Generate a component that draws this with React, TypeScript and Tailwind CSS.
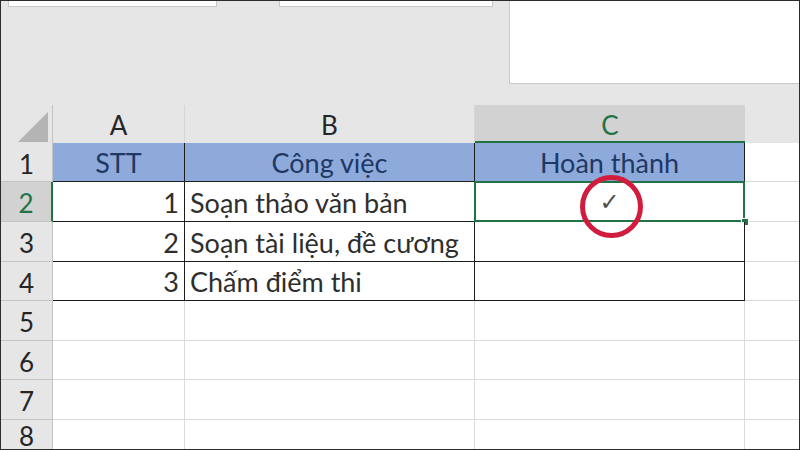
import React from 'react';

const GREEN = 'border-[#217346]';

const rowHeights = [39, 40, 40, 39, 40, 39, 40, 30];

const data: Record<number, [string, string, string]> = {
  1: ['STT', 'Công việc', 'Hoàn thành'],
  2: ['1', 'Soạn thảo văn bản', '✓'],
  3: ['2', 'Soạn tài liệu, đề cương', ''],
  4: ['3', 'Chấm điểm thi', ''],
};

function RowHeader({ n, h }: { n: number; h: number }) {
  const selected = n === 2;
  return (
    <div
      className={`flex items-center justify-center border-b border-[#c4c4c4] ${
        selected
          ? 'bg-[#d2d2d2] text-[#217346] border-r-2 border-r-[#217346]'
          : 'bg-[#e6e6e6] text-[#262626] border-r border-r-[#c4c4c4]'
      }`}
      style={{ height: h }}
    >
      <span className="text-[26px] leading-none pt-[3px]">{n}</span>
    </div>
  );
}

export default function App() {
  return (
    <div
      className="w-[800px] h-[450px] overflow-hidden bg-[#e6e6e6] border border-[#2b2b2b] flex flex-col"
      style={{ fontFamily: 'Lato, "Noto Sans", sans-serif' }}
    >
      {/* ribbon remains above the sheet */}
      <div className="h-[104px] flex items-start shrink-0">
        <div className="ml-[7px] w-[209px] h-[6px] bg-white border-x border-b border-[#c8c8c8]" />
        <div className="ml-[62px] w-[214px] h-[6px] bg-white border-x border-b border-[#c8c8c8]" />
        <div className="ml-[16px] flex-1 h-[83px] bg-white border-l border-b border-[#c8c8c8]" />
      </div>

      <div className="grid grid-cols-[52px_132px_290px_270px_1fr] flex-1">
        {/* column headers */}
        <div className="h-[38px] border-r border-[#c4c4c4] flex items-end justify-end pr-[4px] pb-[1px]">
          <div className="w-0 h-0 border-l-[30px] border-l-transparent border-b-[30px] border-b-[#b4b4b4]" />
        </div>
        {['A', 'B'].map((c) => (
          <div
            key={c}
            className="h-[38px] border-r border-[#d6d6d6] flex items-center justify-center text-[26px] text-[#262626] pt-[3px]"
          >
            {c}
          </div>
        ))}
        <div className={`h-[38px] bg-[#d2d2d2] border-b-2 ${GREEN} flex items-center justify-center text-[26px] text-[#217346] pt-[4px]`}>
          C
        </div>
        <div className="h-[38px]" />

        {rowHeights.map((h, i) => {
          const r = i + 1;
          const row = data[r];
          const inTable = !!row;
          const header = r === 1;
          const cellBase = inTable
            ? `${header ? 'bg-[#8eaadb] text-[#1f3864]' : 'bg-white text-[#2e2e2e]'} border-r border-b border-[#1c1c1c]`
            : 'bg-white border-r border-b border-[#dadada]';
          return (
            <React.Fragment key={r}>
              <RowHeader n={r} h={h} />
              <div
                className={`${cellBase} flex items-center text-[27px] pt-[3px] ${header ? 'justify-center' : 'justify-end pr-[5px]'}`}
                style={{ height: h }}
              >
                {row?.[0]}
              </div>
              <div
                className={`${cellBase} flex items-center text-[27px] pt-[3px] ${header ? 'justify-center' : 'justify-start pl-[5px]'} whitespace-nowrap`}
                style={{ height: h }}
              >
                {row?.[1]}
              </div>
              <div
                className={`${cellBase} relative flex items-center justify-center text-[27px] pt-[3px]`}
                style={{ height: h }}
              >
                {r === 2 ? (
                  <>
                    <span
                      className="text-[24px] leading-none text-[#4f4f4f] -mt-[2px]"
                      style={{ fontFamily: '"DejaVu Sans", sans-serif' }}
                    >
                      ✓
                    </span>
                    <div className={`absolute -left-[1px] -top-[1px] -right-[1px] -bottom-[1px] border-2 ${GREEN}`} />
                    <div className="absolute -right-[5px] -bottom-[5px] w-[8px] h-[8px] bg-[#217346] border border-white" />
                    <div className="absolute left-[105px] top-[-7px] w-[63px] h-[63px] rounded-full border-[5px] border-[#d21c3e] z-10" />
                  </>
                ) : (
                  row?.[2]
                )}
              </div>
              <div className="bg-white border-b border-[#dadada]" style={{ height: h }} />
            </React.Fragment>
          );
        })}
      </div>
    </div>
  );
}
